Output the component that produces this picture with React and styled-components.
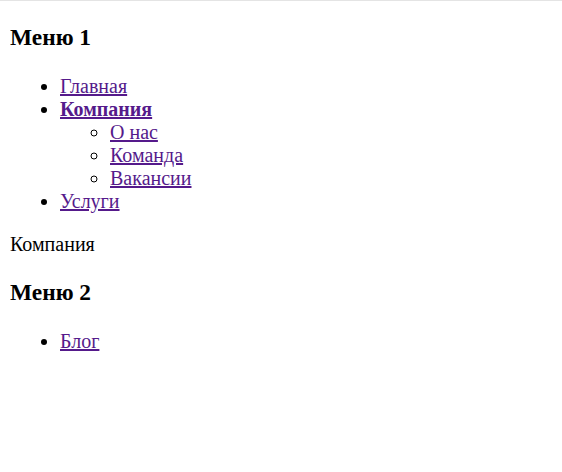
import React from "react";
import styled, { createGlobalStyle } from "styled-components";

const Global = createGlobalStyle`
  html {
    border-top: 1px solid #e4e4e4;
    background: #fff;
  }
  body {
    margin: 0 10px 10px;
    font-family: "Liberation Serif", "Times New Roman", serif;
    font-size: 20px;
    color: #000;
  }
`;

const Heading = styled.h3`
  font-size: 23.4px;
  font-weight: bold;
  margin: 23.4px 0;
`;

const List = styled.ul`
  margin: ${(p) => (p.$nested ? "0" : "20px 0")};
  padding-left: 50px;
  list-style-type: ${(p) => (p.$nested ? "circle" : "disc")};
`;

const Item = styled.li`
  line-height: normal;
`;

const Link = styled.a`
  color: #551a8b;
  text-decoration: underline;
  font-weight: ${(p) => (p.$active ? "bold" : "normal")};
`;

const Current = styled.p`
  margin: 20px 0;
`;

const Menu = styled.nav``;

export default function App() {
  return (
    <>
      <Global />
      <Menu>
        <Heading>Меню 1</Heading>
        <List>
          <Item>
            <Link href="#">Главная</Link>
          </Item>
          <Item>
            <Link href="#" $active>
              Компания
            </Link>
            <List $nested>
              <Item>
                <Link href="#">О нас</Link>
              </Item>
              <Item>
                <Link href="#">Команда</Link>
              </Item>
              <Item>
                <Link href="#">Вакансии</Link>
              </Item>
            </List>
          </Item>
          <Item>
            <Link href="#">Услуги</Link>
          </Item>
        </List>
      </Menu>
      <Current>Компания</Current>
      <Menu>
        <Heading>Меню 2</Heading>
        <List>
          <Item>
            <Link href="#">Блог</Link>
          </Item>
        </List>
      </Menu>
    </>
  );
}
